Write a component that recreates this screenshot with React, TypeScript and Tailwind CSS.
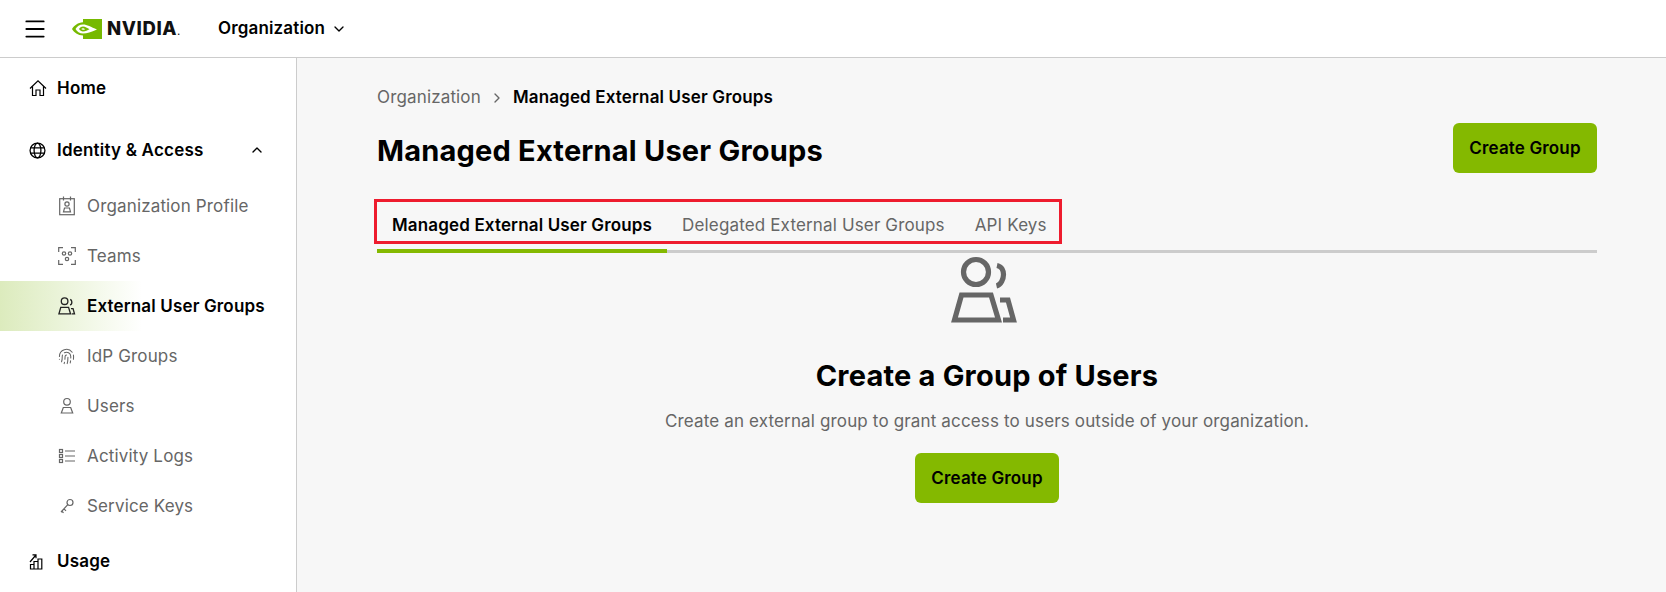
import { Menu, ChevronDown, ChevronUp, ChevronRight, Fingerprint } from "lucide-react";

const font = "font-['Inter','Noto_Sans',sans-serif]";

function NvidiaLogo() {
  return (
    <div className="flex items-center gap-[5px] w-[111px]">
      <svg width="30" height="20" viewBox="0 0 30 20" className="shrink-0">
        <path d="M11 0H30V20H11V16.500C6 16.500 2 13.500 0 10C2 6.500 6 3.500 11 3.200Z" fill="#76b900" />
        <path d="M11 5.500C7.500 5.500 5 7.500 3.500 10C5 12.500 7.500 14.500 11 14.500C15 14.500 19 13 25 10.500C19 8 15 5.500 11 5.500Z" fill="#fff" />
        <path d="M11 7.500C9 7.500 8 8.500 7 10C8 11.300 9.500 12.500 11 12.500C13.500 12.500 15.500 11.500 17.500 10.300C15 9 13.500 7.500 11 7.500Z" fill="#76b900" />
        <path d="M11 9.300C10.200 9.300 9.700 9.600 9.300 10C9.700 10.500 10.200 10.800 11 10.800C11.800 10.800 12.500 10.500 13 10.200C12.400 9.700 11.800 9.300 11 9.300Z" fill="#fff" />
      </svg>
      <span className="font-extrabold text-[18.500px] tracking-[0.6px] leading-none text-[#111]">NVIDIA<span className="text-[8px]">.</span></span>
    </div>
  );
}

function GroupIcon({ size = 72, width = 5.200 }: { size?: number; width?: number }) {
  return (
    <svg width={size} height={(size * 68) / 72} viewBox="0 0 72 68" fill="none" stroke="currentColor" strokeWidth={width}>
      <circle cx="25" cy="16" r="12.500" />
      <path d="M46 9.500C51 10.500 52.500 15 52.500 18.500C52.500 23 50 29 45.500 30" />
      <path d="M10.500 39H40L47.500 64H3.500Z" />
      <path d="M49 44H57L62.500 64H52" />
    </svg>
  );
}

const stroke = { fill: "none", stroke: "currentColor", strokeWidth: 1.200 };

function HomeIcon() {
  return (
    <svg width="18" height="18" viewBox="0 0 18 18" {...stroke}>
      <path d="M1 9.500L9 1.800L17 9.500" />
      <path d="M3.500 7.300V16.500H7V11H11V16.500H14.500V7.300" />
    </svg>
  );
}

function GlobeIcon() {
  return (
    <svg width="17" height="17" viewBox="0 0 16 16" {...stroke}>
      <circle cx="8" cy="8" r="7" />
      <ellipse cx="8" cy="8" rx="3.200" ry="7" />
      <path d="M1.500 5.500H14.500M1.500 10.500H14.500" />
    </svg>
  );
}

function OrgIcon() {
  return (
    <svg width="18" height="20" viewBox="0 0 18 20" {...stroke}>
      <rect x="1.700" y="2.700" width="14.600" height="16" />
      <path d="M5.500 0.500V4.500M12.500 0.500V4.500" />
      <circle cx="9" cy="8" r="2.100" />
      <path d="M6.500 12H11.500L12.500 15.800H5.500Z" />
    </svg>
  );
}

function TeamsIcon() {
  return (
    <svg width="18" height="18" viewBox="0 0 18 18" {...stroke}>
      <path d="M0.700 5V0.700H5M13 0.700H17.300V5M0.700 13V17.300H5M17.300 13V17.300H13" />
      <circle cx="6" cy="6.500" r="1.700" />
      <circle cx="12" cy="6.500" r="1.700" />
      <circle cx="9" cy="12" r="1.700" />
    </svg>
  );
}

function UserIcon() {
  return (
    <svg width="18" height="18" viewBox="0 0 18 18" {...stroke}>
      <circle cx="9" cy="4.800" r="3.300" />
      <path d="M5.300 10.500H12.700L14.700 16H3.300Z" />
    </svg>
  );
}

function LogsIcon() {
  return (
    <svg width="18" height="16" viewBox="0 0 18 16" {...stroke}>
      <rect x="1.500" y="1.500" width="3" height="3" />
      <rect x="1.500" y="6.500" width="3" height="3" />
      <rect x="1.500" y="11.500" width="3" height="3" />
      <path d="M7 3H17M7 8H17M7 13H17" />
    </svg>
  );
}

function KeyIcon() {
  return (
    <svg width="18" height="16" viewBox="0 0 18 16" {...stroke}>
      <circle cx="12" cy="4.500" r="3" />
      <path d="M9.800 6.700L3 14M6 10.800L8 12.800M3.800 13L5.500 14.800" />
    </svg>
  );
}

function UsageIcon() {
  return (
    <svg width="14" height="17" viewBox="0 0 14 17" {...stroke}>
      <path d="M1 9L6.500 2.500M3.500 1.800H7V5.300" />
      <path d="M1.500 11.500H5V16H1.500ZM5 8.500H9V16H5ZM9 6H12.800V16H9Z" />
    </svg>
  );
}

function TopItem({ icon, label, chevron }: { icon: React.ReactNode; label: string; chevron?: boolean }) {
  return (
    <div className="h-[50px] flex items-center pl-[29px] pr-[31px] text-black text-[17px] tracking-[0.2px] font-semibold">
      <span className="w-[28px] shrink-0">{icon}</span>
      <span className="flex-1 pt-[2px]">{label}</span>
      {chevron && <ChevronUp size={16} strokeWidth={2} />}
    </div>
  );
}

function SubItem({ icon, label, active }: { icon: React.ReactNode; label: string; active?: boolean }) {
  return (
    <div className={`h-[50px] flex items-center pl-[58px] text-[17px] tracking-[0.15px] ${active ? "font-semibold text-black bg-gradient-to-r from-[#dcebbd] to-white to-[48%]" : "text-[#666]"}`}>
      <span className={`w-[29px] shrink-0 ${active ? "text-[#222]" : "text-[#666]"}`}>{icon}</span>
      <span className="pt-[1px]">{label}</span>
    </div>
  );
}

function GreenButton() {
  return (
    <button className="w-[144px] h-[50px] pt-[2px] rounded-md bg-[#84b900] text-black text-[17px] tracking-[0.15px] font-semibold">Create Group</button>
  );
}

export default function App() {
  return (
    <div className={`${font} w-[1666px] h-[592px] overflow-hidden flex flex-col bg-white`}>
      <header className="h-[58px] shrink-0 flex items-center border-b border-[#ccc] pl-[22px]">
        <Menu size={26} strokeWidth={1.700} className="text-black mr-[24px]" />
        <NvidiaLogo />
        <span className="ml-[35px] text-[17px] tracking-[0.15px] font-semibold text-black">Organization</span>
        <ChevronDown size={16} className="ml-[6px] text-black" />
      </header>
      <div className="flex-1 flex min-h-0">
        <aside className="w-[297px] shrink-0 border-r border-[#ccc] pt-[5px]">
          <TopItem icon={<HomeIcon />} label="Home" />
          <div className="h-[12px]" />
          <TopItem icon={<GlobeIcon />} label="Identity & Access" chevron />
          <div className="h-[6px]" />
          <SubItem icon={<OrgIcon />} label="Organization Profile" />
          <SubItem icon={<TeamsIcon />} label="Teams" />
          <SubItem icon={<GroupIcon size={19} width={5} />} label="External User Groups" active />
          <SubItem icon={<Fingerprint size={17} strokeWidth={1.500} />} label="IdP Groups" />
          <SubItem icon={<UserIcon />} label="Users" />
          <SubItem icon={<LogsIcon />} label="Activity Logs" />
          <SubItem icon={<KeyIcon />} label="Service Keys" />
          <div className="h-[5px]" />
          <TopItem icon={<UsageIcon />} label="Usage" />
        </aside>
        <main className="flex-1 bg-[#f7f7f7] pl-[80px] pr-[69px]">
          <div className="pt-[30px] flex items-center text-[17px] tracking-[0.15px] h-[50px]">
            <span className="text-[#666]">Organization</span>
            <ChevronRight size={16} className="mx-[8px] text-[#666]" />
            <span className="font-semibold text-black">Managed External User Groups</span>
          </div>
          <div className="flex items-center justify-between h-[50px] mt-[15px]">
            <h1 className="text-[29px] tracking-[0.2px] font-bold text-black mt-[6px]">Managed External User Groups</h1>
            <GreenButton />
          </div>
          <div className="relative mt-[26px] h-[54px] border-b-[3px] border-[#ccc] flex text-[17px] tracking-[0.15px] items-center">
            <div className="px-[15px] pt-[2px] font-semibold text-black h-full flex items-center">Managed External User Groups</div>
            <div className="px-[15px] pt-[2px] text-[#666]">Delegated External User Groups</div>
            <div className="px-[15px] pt-[2px] text-[#666]">API Keys</div>
            <div className="absolute left-0 -bottom-[3px] w-[290px] h-[4px] bg-[#84b900]" />
            <div className="absolute -left-[3px] top-0 w-[688px] h-[45px] border-[3px] border-[#ee1c2e]" />
          </div>
          <div className="flex flex-col items-center pt-[3px] text-[#666]">
            <GroupIcon />
            <h2 className="mt-[34px] text-[29px] tracking-[0.2px] font-bold text-black leading-[36px]">Create a Group of Users</h2>
            <p className="mt-[15px] text-[17px] tracking-[0.15px] leading-[24px] text-[#666]">Create an external group to grant access to users outside of your organization.</p>
            <div className="mt-[20px]"><GreenButton /></div>
          </div>
        </main>
      </div>
    </div>
  );
}
